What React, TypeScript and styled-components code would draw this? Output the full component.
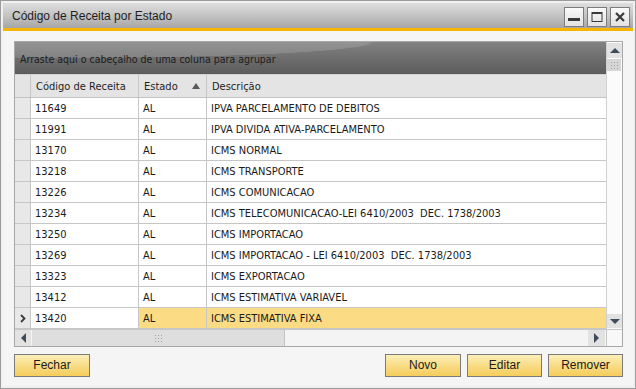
import React from "react";
import styled, { createGlobalStyle, css } from "styled-components";

const GlobalStyle = createGlobalStyle`
  html, body { margin: 0; padding: 0; background: #ffffff; }
  * { box-sizing: border-box; }
`;

const FONT = `"Liberation Sans", Arial, sans-serif`;
const GRID_FONT = `"DejaVu Sans Condensed", "Liberation Sans", sans-serif`;

const Window = styled.div`
  width: 636px;
  height: 389px;
  border: 1px solid #9c9c9c;
  padding: 2px;
  background: #f0f0f0;
  display: flex;
  flex-direction: column;
  font-family: ${FONT};
`;

const TitleBar = styled.div`
  height: 25px;
  display: flex;
  align-items: center;
  justify-content: space-between;
  padding: 0 3px 0 9px;
  background: linear-gradient(#dedede, #c4c4c4 50%, #a6a6a6);
`;

const Title = styled.div`
  font-size: 12px;
  color: #1e1e1e;
  padding-top: 1px;
`;

const TitleButtons = styled.div`
  display: flex;
  gap: 3px;
  padding-top: 2px;
`;

const TitleButton = styled.div`
  width: 20px;
  height: 20px;
  border: 1px solid #7c7c7c;
  background: linear-gradient(#fafafa, #e2e2e2);
  display: flex;
  align-items: center;
  justify-content: center;
`;

const AccentLine = styled.div`
  height: 3px;
  background: #f7b500;
`;

const Body = styled.div`
  flex: 1;
  background: #f5f5f5;
  padding: 10px 10px 0 11px;
  display: flex;
  flex-direction: column;
`;

const GridFrame = styled.div`
  height: 306px;
  border: 1px solid #a8a8a8;
  display: grid;
  grid-template-columns: 1fr 16px;
  grid-template-rows: 1fr 17px;
  background: #ffffff;
`;

const GridMain = styled.div`
  display: flex;
  flex-direction: column;
  overflow: hidden;
`;

const GroupPanel = styled.div`
  height: 33px;
  display: flex;
  align-items: center;
  padding-left: 5px;
  padding-top: 1px;
  font-family: ${GRID_FONT};
  font-size: 10.5px;
  color: #1c1c1c;
  background:
    radial-gradient(ellipse 300px 16px at 10% 0%, rgba(255, 255, 255, 0.14) 0 98%, transparent 100%),
    linear-gradient(#828282, #6e6e6e 50%, #5c5c5c);
  border-bottom: 1px solid #d0d0d0;
`;

const Row = styled.div`
  display: grid;
  grid-template-columns: 16px 108px 68px 1fr;
  height: 21px;
  border-bottom: 1px solid #c6c6c6;
`;

const HeaderRow = styled(Row)`
  height: 23px;
  background: #e4e4e4;
  border-bottom: 1px solid #c2c2c2;
`;

const Cell = styled.div<{ $selected?: boolean; $indicator?: boolean }>`
  border-right: 1px solid #c6c6c6;
  display: flex;
  align-items: center;
  padding-left: 4px;
  font-family: ${GRID_FONT};
  font-size: 11px;
  color: #1a1a1a;
  white-space: pre;
  overflow: hidden;
  background: #ffffff;
  ${(p) =>
    p.$indicator &&
    css`
      background: #e8e8e8;
      padding-left: 0;
      justify-content: center;
    `}
  ${(p) =>
    p.$selected &&
    css`
      background: #fbdc85;
    `}
  &:last-child { border-right: none; }
`;

const HeaderCell = styled(Cell)`
  background: #e4e4e4;
  padding-left: 5px;
  justify-content: space-between;
  padding-right: 6px;
  color: #1e1e1e;
`;

const VScroll = styled.div`
  background: #fbfbfb;
  border-left: 1px solid #d0d0d0;
  display: flex;
  flex-direction: column;
  padding: 1px 1px 1px 0;
`;

const ScrollBtn = styled.div<{ $w?: number; $h?: number }>`
  width: ${(p) => p.$w ?? 15}px;
  height: ${(p) => p.$h ?? 15}px;
  background: #e2e2e2;
  display: flex;
  align-items: center;
  justify-content: center;
  flex-shrink: 0;
`;

const VGrip = styled.div`
  height: 12px;
  margin-top: 1px;
  background: #d6d6d6;
  display: flex;
  align-items: center;
  justify-content: center;
`;

const VTrack = styled.div`
  flex: 1;
`;

const HScroll = styled.div`
  background: #f4f4f4;
  border-top: 1px solid #c6c6c6;
  display: flex;
  align-items: center;
  padding-right: 1px;
`;

const HThumb = styled.div`
  width: 253px;
  height: 100%;
  background: #dedede;
  border-right: 1px solid #c2c2c2;
  margin-left: 1px;
  display: flex;
  align-items: center;
  justify-content: center;
`;

const HTrack = styled.div`
  flex: 1;
`;

const Corner = styled.div`
  background: #f8f8f8;
  border-left: 1px solid #c6c6c6;
  border-top: 1px solid #c6c6c6;
`;

const ButtonBar = styled.div`
  display: flex;
  align-items: center;
  padding-top: 7px;
  gap: 6px;
`;

const Spacer = styled.div`
  flex: 1;
`;

const ActionButton = styled.div<{ $w: number }>`
  width: ${(p) => p.$w}px;
  height: 23px;
  border: 1px solid #7a7a7a;
  background: linear-gradient(#fcefb8, #f8dc86 50%, #f5cd5c);
  display: flex;
  align-items: center;
  justify-content: center;
  font-size: 12px;
  color: #1c1c1c;
  padding-bottom: 1px;
`;

const rows: [string, string, string][] = [
  ["11649", "AL", "IPVA PARCELAMENTO DE DEBITOS"],
  ["11991", "AL", "IPVA DIVIDA ATIVA-PARCELAMENTO"],
  ["13170", "AL", "ICMS NORMAL"],
  ["13218", "AL", "ICMS TRANSPORTE"],
  ["13226", "AL", "ICMS COMUNICACAO"],
  ["13234", "AL", "ICMS TELECOMUNICACAO-LEI 6410/2003  DEC. 1738/2003"],
  ["13250", "AL", "ICMS IMPORTACAO"],
  ["13269", "AL", "ICMS IMPORTACAO - LEI 6410/2003  DEC. 1738/2003"],
  ["13323", "AL", "ICMS EXPORTACAO"],
  ["13412", "AL", "ICMS ESTIMATIVA VARIAVEL"],
  ["13420", "AL", "ICMS ESTIMATIVA FIXA"],
];

const Dots = () => (
  <svg width="7" height="7" viewBox="0 0 7 7">
    {[0, 3, 6].map((y) =>
      [0, 3, 6].map((x) => (
        <rect key={`${x}-${y}`} x={x} y={y} width="1" height="1" fill="#9aa4ae" />
      ))
    )}
  </svg>
);

const Tri = ({ dir, color = "#3e4b58" }: { dir: "up" | "down" | "left" | "right"; color?: string }) => {
  const pts = {
    up: "0,6 10,6 5,1",
    down: "0,1 10,1 5,6",
    left: "6,0 6,10 1,5",
    right: "1,0 1,10 6,5",
  }[dir];
  const vert = dir === "up" || dir === "down";
  return (
    <svg width={vert ? 10 : 7} height={vert ? 7 : 10} viewBox={vert ? "0 0 10 7" : "0 0 7 10"}>
      <polygon points={pts} fill={color} />
    </svg>
  );
};

export default function App() {
  return (
    <>
      <GlobalStyle />
      <Window>
        <TitleBar>
          <Title>Código de Receita por Estado</Title>
          <TitleButtons>
            <TitleButton>
              <svg width="12" height="12" viewBox="0 0 12 12">
                <rect x="0" y="7" width="12" height="3" fill="#3a3a3a" />
              </svg>
            </TitleButton>
            <TitleButton>
              <svg width="12" height="12" viewBox="0 0 12 12">
                <rect x="1" y="1.5" width="10" height="9" fill="none" stroke="#3a3a3a" strokeWidth="1" />
                <rect x="1" y="1" width="10" height="2" fill="#3a3a3a" />
              </svg>
            </TitleButton>
            <TitleButton>
              <svg width="12" height="12" viewBox="0 0 12 12">
                <path d="M2 2 L10 10 M10 2 L2 10" stroke="#3a3a3a" strokeWidth="2.2" />
              </svg>
            </TitleButton>
          </TitleButtons>
        </TitleBar>
        <AccentLine />
        <Body>
          <GridFrame>
            <GridMain>
              <GroupPanel>Arraste aqui o cabeçalho de uma coluna para agrupar</GroupPanel>
              <HeaderRow>
                <HeaderCell $indicator />
                <HeaderCell>Código de Receita</HeaderCell>
                <HeaderCell>
                  Estado
                  <svg width="8" height="6" viewBox="0 0 8 6">
                    <polygon points="0,6 8,6 4,0" fill="#5a5a5a" />
                  </svg>
                </HeaderCell>
                <HeaderCell>Descrição</HeaderCell>
              </HeaderRow>
              {rows.map(([code, uf, desc], i) => {
                const sel = i === rows.length - 1;
                return (
                  <Row key={code}>
                    <Cell $indicator>
                      {sel && (
                        <svg width="6" height="9" viewBox="0 0 6 9">
                          <path d="M1 1 L4.5 4.5 L1 8" fill="none" stroke="#3a3a3a" strokeWidth="1.8" />
                        </svg>
                      )}
                    </Cell>
                    <Cell>{code}</Cell>
                    <Cell $selected={sel}>{uf}</Cell>
                    <Cell $selected={sel}>{desc}</Cell>
                  </Row>
                );
              })}
            </GridMain>
            <VScroll>
              <ScrollBtn $h={15}>
                <Tri dir="up" />
              </ScrollBtn>
              <VGrip>
                <Dots />
              </VGrip>
              <VTrack />
              <ScrollBtn $h={14}>
                <Tri dir="down" />
              </ScrollBtn>
            </VScroll>
            <HScroll>
              <ScrollBtn $w={16} $h={16}>
                <Tri dir="left" />
              </ScrollBtn>
              <HThumb>
                <Dots />
              </HThumb>
              <HTrack />
              <ScrollBtn $w={17} $h={16}>
                <Tri dir="right" />
              </ScrollBtn>
            </HScroll>
            <Corner />
          </GridFrame>
          <ButtonBar>
            <ActionButton $w={76}>Fechar</ActionButton>
            <Spacer />
            <ActionButton $w={76}>Novo</ActionButton>
            <ActionButton $w={75}>Editar</ActionButton>
            <ActionButton $w={75}>Remover</ActionButton>
          </ButtonBar>
        </Body>
      </Window>
    </>
  );
}
